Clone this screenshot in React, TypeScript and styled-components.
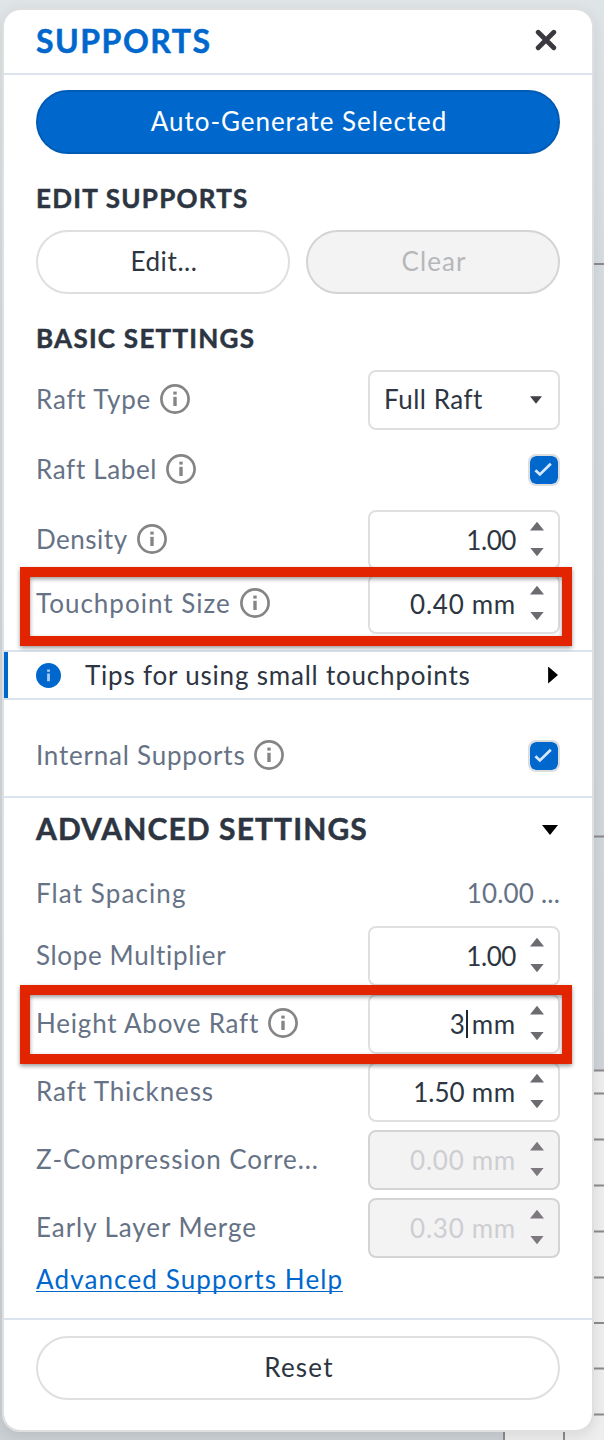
import { useState } from "react";
import type { ReactNode } from "react";
import styled, { createGlobalStyle, css } from "styled-components";

const InfoIcon = () => (
  <svg width="30" height="30" viewBox="0 0 30 30" fill="none">
    <circle cx="15" cy="15" r="13.6" stroke="#858587" strokeWidth="2.7" />
    <path d="M15 12.8V22" stroke="#858587" strokeWidth="3.4" />
    <path d="M15 7.6V10.6" stroke="#858587" strokeWidth="3.4" />
  </svg>
);

const CheckMark = () => (
  <svg width="28" height="28" viewBox="0 0 28 28" fill="none">
    <path d="M5.4 14.2L9.9 18.4L20.8 7.8" stroke="#d6e7f8" strokeWidth="2.8" />
  </svg>
);

const TipIcon = () => (
  <svg width="25" height="25" viewBox="0 0 25 25">
    <circle cx="12.5" cy="12.5" r="12.5" fill="#0068cd" />
    <path d="M12.5 10.6V18.2M12.5 6.4V8.8" stroke="#a9cdf0" strokeWidth="2.8" />
  </svg>
);

const CloseIcon = () => (
  <svg width="22" height="22" viewBox="0 0 22 22">
    <path
      d="M3.2 3.2L18.8 18.8M18.8 3.2L3.2 18.8"
      stroke="#3b383f"
      strokeWidth="4.8"
      strokeLinecap="round"
    />
  </svg>
);

// 패널 뒤쪽 뷰포트의 격자
const gridRows = [1070.5, 1093.5, 1139.5, 1185.5, 1231.5, 1277.5, 1323, 1368.5, 1414.5];

const ViewportGrid = () => (
  <GridSvg width="604" height="1440" viewBox="0 0 604 1440">
    <defs>
      <linearGradient id="sky" x1="0" y1="0" x2="0" y2="1">
        <stop offset="0" stopColor="#dfe5e6" />
        <stop offset="0.2" stopColor="#d5dbdf" />
        <stop offset="1" stopColor="#cbd0d4" />
      </linearGradient>
    </defs>
    <rect width="604" height="1440" fill="url(#sky)" />
    <rect x="504" y="1071" width="100" height="369" fill="#eeeeee" />
    <g stroke="#8c8a8d" strokeWidth="2">
      <path d="M590 264H604M590 836.5H604" />
      {gridRows.map((y) => (
        <path key={y} d={`M590 ${y}H604`} />
      ))}
      <path d="M504 1425V1440M564 1425V1440" />
    </g>
  </GridSvg>
);

type FieldProps = {
  label: string;
  track?: number;
  info?: boolean;
  height?: number;
  children: ReactNode;
};

const Field = ({ label, track = 0.9, info, height = 60, children }: FieldProps) => (
  <Row $height={height}>
    <Label>
      <LabelText $track={track}>{label}</LabelText>
      {info && <InfoIcon />}
    </Label>
    {children}
  </Row>
);

type NumberFieldProps = {
  value: string;
  unit?: string;
  track?: number;
  disabled?: boolean;
  editing?: boolean;
};

const NumberField = ({
  value,
  unit,
  track = 0.8,
  disabled,
  editing,
}: NumberFieldProps) => (
  <Control $disabled={disabled}>
    <Value $disabled={disabled} $track={track}>
      {value}
      {editing && <Caret />}
      {unit && <Unit $editing={editing}>{unit}</Unit>}
    </Value>
    <Spinner>
      <Triangle $dir="up" $size={14} $color={disabled ? "#7d787e" : "#6c6b6f"} />
      <Triangle $dir="down" $size={14} $color={disabled ? "#7d787e" : "#6c6b6f"} />
    </Spinner>
  </Control>
);

const App = () => {
  const [raftLabel, setRaftLabel] = useState(true);
  const [internal, setInternal] = useState(true);

  return (
    <>
      <GlobalStyle />
      <Viewport>
        <ViewportGrid />
        <Panel>
          <Header>
            <Title>SUPPORTS</Title>
            <CloseButton aria-label="Close">
              <CloseIcon />
            </CloseButton>
          </Header>

          <Section>
            <PillButton $variant="primary" $track={0.95}>
              Auto-Generate Selected
            </PillButton>
            <Heading>EDIT SUPPORTS</Heading>
            <ButtonRow>
              <PillButton $track={0.6}>Edit...</PillButton>
              <PillButton $variant="disabled" $track={1.1} disabled>
                Clear
              </PillButton>
            </ButtonRow>
            <Heading>BASIC SETTINGS</Heading>
            <BasicFields>
              <Field label="Raft Type" track={0.8} info>
                <Control>
                  <SelectText>Full Raft</SelectText>
                  <Triangle $dir="down" $size={12} $color="#424045" />
                </Control>
              </Field>
              <Field label="Raft Label" track={0.65} info>
                <Checkbox onClick={() => setRaftLabel(!raftLabel)}>
                  {raftLabel && <CheckMark />}
                </Checkbox>
              </Field>
              <Field label="Density" track={0.5} info>
                <NumberField value="1.00" track={-0.4} />
              </Field>
            </BasicFields>
            <Highlighted $top={-7}>
              <Field label="Touchpoint Size" track={1} info>
                <NumberField value="0.40" unit="mm" />
              </Field>
            </Highlighted>
          </Section>

          <TipBar>
            <TipIcon />
            <TipText>Tips for using small touchpoints</TipText>
            <Triangle $dir="right" $size={17} $color="#000" />
          </TipBar>

          <InternalSection>
            <Field label="Internal Supports" track={0.77} info>
              <Checkbox onClick={() => setInternal(!internal)}>
                {internal && <CheckMark />}
              </Checkbox>
            </Field>
          </InternalSection>

          <Advanced>
            <AdvancedHeader>
              <AdvancedTitle>ADVANCED SETTINGS</AdvancedTitle>
              <Triangle $dir="down" $size={16} $color="#000" />
            </AdvancedHeader>
            <FlatSpacing>
              <Field label="Flat Spacing" track={1.1}>
                <ReadOnly>10.00 ...</ReadOnly>
              </Field>
            </FlatSpacing>
            <AdvancedFields>
              <Field label="Slope Multiplier" track={0.65}>
                <NumberField value="1.00" track={-0.4} />
              </Field>
              <Highlighted $top={-9}>
                <Field label="Height Above Raft" track={0.8} info>
                  <NumberField value="3" unit="mm" editing />
                </Field>
              </Highlighted>
              <Field label="Raft Thickness">
                <NumberField value="1.50" unit="mm" track={0} />
              </Field>
              <Field label="Z-Compression Corre..." track={0.92}>
                <NumberField value="0.00" unit="mm" disabled />
              </Field>
              <Field label="Early Layer Merge" track={0.95}>
                <NumberField value="0.30" unit="mm" disabled />
              </Field>
            </AdvancedFields>
            <HelpLink href="#">Advanced Supports Help</HelpLink>
          </Advanced>

          <Footer>
            <PillButton $track={1.2}>Reset</PillButton>
          </Footer>
        </Panel>
      </Viewport>
    </>
  );
};

export default App;

const GlobalStyle = createGlobalStyle`
  *,
  *::after {
    box-sizing: border-box;
  }

  body {
    margin: 0;
    font-family: Lato, "Liberation Sans", sans-serif;
    font-size: 26px;
    line-height: 32px;
    color: #2c3541;
  }

  h1,
  h2 {
    -webkit-text-stroke: 0.5px currentColor;
  }

  button {
    font: inherit;
    color: inherit;
    cursor: pointer;
  }

  svg {
    display: block;
    flex-shrink: 0;
  }
`;

const Viewport = styled.main`
  position: relative;
  width: 604px;
  height: 1440px;
  padding: 8px 10px 0 2px;
  overflow: hidden;
`;

const GridSvg = styled.svg`
  position: absolute;
  top: 0;
  left: 0;
`;

const Panel = styled.section`
  position: relative;
  width: 592px;
  height: 1424px;
  background: #fff;
  background-clip: padding-box;
  border: 2px solid #dddfe1;
  border-radius: 18px;
  box-shadow: 0 4px 14px rgba(0, 0, 0, 0.09);
`;

const Header = styled.header`
  display: flex;
  align-items: center;
  justify-content: space-between;
  height: 65px;
  padding: 0 35px 2px 32px;
  border-bottom: 2px solid #dbe4ee;
`;

const Title = styled.h1`
  margin: 0;
  font-size: 32px;
  font-weight: 700;
  letter-spacing: 1.5px;
  color: #0068cd;
`;

const CloseButton = styled.button`
  padding: 0 0 1px;
  border: none;
  background: none;
`;

const Section = styled.div`
  display: flex;
  flex-direction: column;
  height: 575px;
  padding: 15px 32px 0;
`;

const variants = {
  primary: css`
    background: #0068cd;
    border-color: #005bb5;
    color: #fff;
  `,
  disabled: css`
    background: #f3f3f3;
    border-color: #d3d4d5;
    color: #b6b7ba;
  `,
  plain: css`
    background: #fff;
    border-color: #dedfe0;
    color: #2c3541;
  `,
};

const PillButton = styled.button<{
  $variant?: keyof typeof variants;
  $track?: number;
}>`
  flex-shrink: 0;
  width: 100%;
  height: 64px;
  padding: 0 0 3px 2px;
  border: 2px solid;
  border-radius: 32px;
  letter-spacing: ${({ $track = 0 }) => $track}px;
  ${({ $variant = "plain" }) => variants[$variant]}
`;

const Heading = styled.h2`
  margin: 28px 0 16px;
  font-size: 26px;
  font-weight: 700;
  letter-spacing: 1.25px;
`;

const ButtonRow = styled.div`
  display: grid;
  grid-template-columns: 1fr 1fr;
  gap: 16px;
`;

const BasicFields = styled.div`
  display: grid;
  gap: 10px;
  margin-bottom: 4px;
`;

const Row = styled.div<{ $height: number }>`
  display: flex;
  align-items: center;
  justify-content: space-between;
  height: ${({ $height }) => $height}px;
`;

const Label = styled.div`
  display: flex;
  align-items: center;
  gap: 9px;
  padding-bottom: 2px;
  color: #667285;
`;

const LabelText = styled.span<{ $track: number }>`
  white-space: nowrap;
  letter-spacing: ${({ $track }) => $track}px;
`;

const Control = styled.div<{ $disabled?: boolean }>`
  display: flex;
  align-items: center;
  justify-content: space-between;
  width: 192px;
  height: 60px;
  padding: 0 14px;
  border: 2px solid ${({ $disabled }) => ($disabled ? "#d3d4d5" : "#dedfe0")};
  border-radius: 8px;
  background: ${({ $disabled }) => ($disabled ? "#f3f3f3" : "#fff")};
`;

const SelectText = styled.span`
  flex: 1;
  padding-bottom: 2px;
  letter-spacing: 0.5px;

  & + i {
    margin-right: 2px;
  }
`;

const Value = styled.span<{ $disabled?: boolean; $track: number }>`
  display: flex;
  flex: 1;
  align-items: center;
  justify-content: flex-end;
  padding: 0 14px 1px 0;
  letter-spacing: ${({ $track }) => $track}px;
  color: ${({ $disabled }) => ($disabled ? "#cdced1" : "#2c3541")};
`;

const Unit = styled.span<{ $editing?: boolean }>`
  margin-left: ${({ $editing }) => ($editing ? 4 : 7)}px;
  letter-spacing: 0.8px;
`;

const Caret = styled.span`
  width: 2px;
  height: 28px;
  background: #1d2530;
`;

const Spinner = styled.span`
  display: flex;
  flex-direction: column;
  gap: 17px;
  padding-bottom: 2px;
`;

const clips = {
  up: "polygon(50% 0, 100% 100%, 0 100%)",
  down: "polygon(0 0, 100% 0, 50% 100%)",
  right: "polygon(0 0, 100% 50%, 0 100%)",
};

const Triangle = styled.i<{
  $dir: keyof typeof clips;
  $size: number;
  $color: string;
}>`
  display: block;
  width: ${({ $dir, $size }) => ($dir === "right" ? $size * 0.58 : $size)}px;
  height: ${({ $dir, $size }) => ($dir === "right" ? $size : $size * 0.62)}px;
  background: ${({ $color }) => $color};
  clip-path: ${({ $dir }) => clips[$dir]};
`;

const Checkbox = styled.button`
  display: flex;
  align-items: center;
  justify-content: center;
  width: 32px;
  height: 32px;
  padding: 0;
  border: 2px solid #dcdddf;
  border-radius: 8px;
  background: #0068cd;
  background-clip: padding-box;
`;

// 빨간 테두리는 행 위에 겹쳐서 그린다
const Highlighted = styled.div<{ $top: number }>`
  position: relative;

  &::after {
    content: "";
    position: absolute;
    z-index: 1;
    top: ${({ $top }) => $top}px;
    left: -16px;
    width: 552px;
    height: 79px;
    border: 10px solid #e22400;
    filter: drop-shadow(0 2px 2px rgba(0, 0, 0, 0.4));
    pointer-events: none;
  }
`;

const TipBar = styled.div`
  display: flex;
  align-items: center;
  height: 50px;
  padding: 0 34px 0 32px;
  border: solid #dbe4ee;
  border-width: 2px 0;
  box-shadow: inset 4px 0 #0068cd;
`;

const TipText = styled.span`
  flex: 1;
  padding: 0 0 1px 24px;
  letter-spacing: 0.8px;
`;

const InternalSection = styled.div`
  height: 98px;
  padding: 26px 32px 0;
  border-bottom: 2px solid #dbe4ee;
`;

const Advanced = styled.div`
  height: 522px;
  padding: 0 32px;
  border-bottom: 2px solid #dbe4ee;
`;

const AdvancedHeader = styled.div`
  display: flex;
  align-items: center;
  justify-content: space-between;
  height: 66px;
  padding: 0 2px 2px 0;
`;

const AdvancedTitle = styled.h2`
  margin: 0;
  padding-bottom: 4px;
  font-size: 30px;
  font-weight: 700;
  letter-spacing: 1.1px;
`;

const FlatSpacing = styled.div`
  padding-bottom: 2px;
`;

const ReadOnly = styled.span`
  padding-bottom: 3px;
  letter-spacing: 0.2px;
  color: #667285;
`;

const AdvancedFields = styled.div`
  display: grid;
  gap: 8px;
`;

const HelpLink = styled.a`
  display: inline-block;
  height: 30px;
  margin-top: 4px;
  line-height: 34px;
  letter-spacing: 1.13px;
  color: #0068cd;
  text-decoration: none;
  border-bottom: 1px solid #0068cd;
`;

const Footer = styled.footer`
  padding: 16px 32px 0;
`;
